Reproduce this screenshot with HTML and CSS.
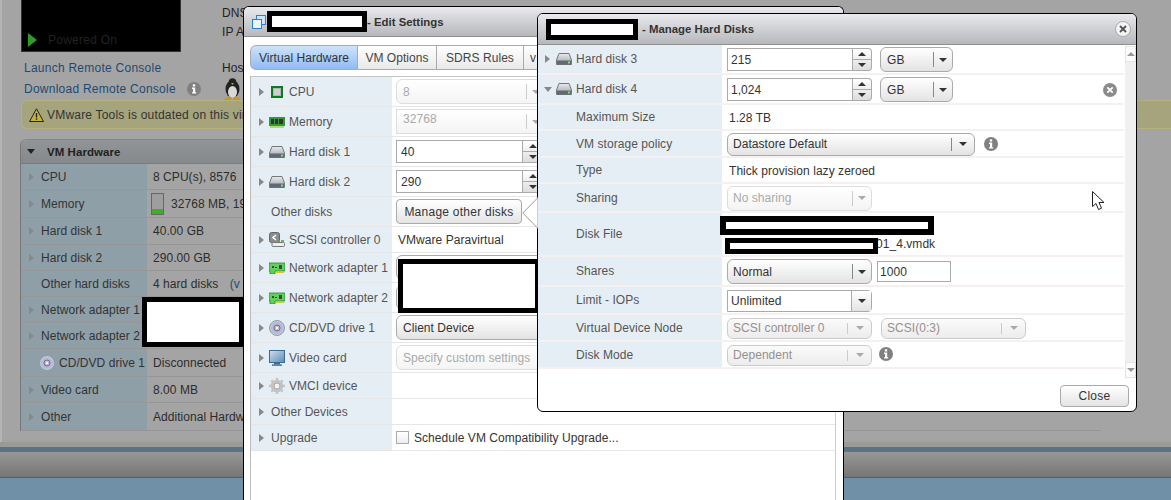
FILE: index.html
```html
<!DOCTYPE html>
<html lang="en">
<head>
<meta charset="utf-8">
<title>Manage Hard Disks</title>
<link rel="stylesheet" href="styles.css">
</head>
<body>
<svg class="defs" width="0" height="0" aria-hidden="true">
  <defs>
    <linearGradient id="hddg" x1="0" y1="0" x2="0" y2="1"><stop offset="0" stop-color="#e8eaee"/><stop offset="1" stop-color="#9ba1a8"/></linearGradient>
    <radialGradient id="cdg"><stop offset="0" stop-color="#eee"/><stop offset=".45" stop-color="#c9a6e0"/><stop offset=".75" stop-color="#a8c4e8"/><stop offset="1" stop-color="#d0d0d0"/></radialGradient>
    <linearGradient id="mong" x1="0" y1="0" x2="1" y2="1"><stop offset="0" stop-color="#cfe0f0"/><stop offset="1" stop-color="#5d8ab5"/></linearGradient>
    <symbol id="i-hdd" viewBox="0 0 16 12"><path d="M3 .5h10L15.5 7v4.500H.5V7z" fill="url(#hddg)" stroke="#777"/><rect x="1" y="7.500" width="14" height="4" fill="#5f6a74"/><rect x="12" y="8.500" width="2" height="2" fill="#7fe060"/></symbol>
    <symbol id="i-cpu" viewBox="0 0 12 12"><rect width="12" height="12" fill="#0d7a1c"/><rect x="2" y="2" width="8" height="8" fill="#b4b4b4"/><rect x="3" y="3" width="6" height="6" fill="#cfcfcf"/></symbol>
    <symbol id="i-mem" viewBox="0 0 16 12"><rect x="0" y="1" width="16" height="9" fill="#2f9b34"/><rect x="2" y="3" width="3" height="5" fill="#333"/><rect x="6" y="3" width="3" height="5" fill="#333"/><rect x="10" y="3" width="4" height="5" fill="#333"/><rect x="1" y="10" width="14" height="2" fill="#b7d86a"/></symbol>
    <symbol id="i-scsi" viewBox="0 0 16 15"><rect x=".5" y=".5" width="10" height="10" rx="2" fill="#8b8b8b" stroke="#666"/><path d="M7 3L4 5.500 7 8" fill="none" stroke="#fff" stroke-width="1.600"/><rect x="3" y="10.500" width="12.500" height="4" rx="1" fill="#eee" stroke="#777"/><rect x="12" y="8" width="3" height="2" fill="#5cc23e"/></symbol>
    <symbol id="i-net" viewBox="0 0 16 12"><path d="M0 1h16v8H6v3H1V9H0z" fill="#5fd05a" stroke="#1c8a2b" stroke-width=".8"/><rect x="3" y="4" width="2" height="2" fill="#444"/><rect x="6" y="5" width="2" height="1" fill="#444"/><rect x="10" y="3" width="3" height="4" fill="#444"/><rect x="7" y="9.400" width="8" height="1.600" fill="#d3c63c"/></symbol>
    <symbol id="i-cd" viewBox="0 0 16 16"><circle cx="8" cy="8" r="7.500" fill="url(#cdg)" stroke="#999"/><circle cx="8" cy="8" r="3" fill="#bbb" stroke="#777"/><circle cx="8" cy="8" r="1.200" fill="#f4f4f4"/></symbol>
    <symbol id="i-mon" viewBox="0 0 16 16"><rect x=".5" y=".5" width="15" height="12" fill="url(#mong)" stroke="#3b6a92"/><rect x="5" y="13" width="6" height="1.400" fill="#3b6a92"/><rect x="3" y="14.400" width="10" height="1.400" fill="#3b6a92"/></symbol>
    <symbol id="i-gear" viewBox="0 0 16 16"><circle cx="8" cy="8" r="4.800" fill="none" stroke="#c4c4c4" stroke-width="3"/><path d="M8 0v16M0 8h16M2.300 2.300l11.400 11.400M13.700 2.300L2.300 13.700" stroke="#c4c4c4" stroke-width="2.400"/><circle cx="8" cy="8" r="3" fill="#f2f2f2" stroke="#aaa"/></symbol>
    <symbol id="i-info" viewBox="0 0 14 14"><circle cx="7" cy="7" r="7" fill="#808080"/><rect x="5.800" y="2.300" width="2.400" height="2.200" fill="#fff"/><path d="M5 5.600h3.200v4.600H9.200v1.400H5v-1.400h1V7H5z" fill="#fff"/></symbol>
  </defs>
</svg>

<div class="page">
  <div class="main">
    <div class="top">
      <div class="console">
        <svg class="power" width="9" height="14" viewBox="0 0 9 14"><path d="M0 0l9 7-9 7z" fill="#2f9b2c"/></svg>
        <span class="power-text">Powered On</span>
      </div>
      <div class="meta">
        <span class="meta-a">DNS</span>
        <span class="meta-b">IP Ad</span>
      </div>
    </div>
    <div class="links">
      <div class="link-row">
        <a class="link">Launch Remote Console</a>
        <span class="host">Host</span>
      </div>
      <div class="link-row">
        <a class="link">Download Remote Console</a>
        <svg class="dl-info" width="14" height="14"><use href="#i-info"/></svg>
        <svg class="penguin" width="19" height="22" viewBox="0 0 19 22"><ellipse cx="9.500" cy="11" rx="7" ry="9" fill="#222"/><ellipse cx="9.500" cy="14" rx="4.500" ry="6" fill="#d8d8d8"/><circle cx="9.500" cy="4" r="3.800" fill="#222"/><path d="M8 5h3l-1.500 2z" fill="#c9962e"/><path d="M0 22l6-4 3 4zM19 22l-6-4-3 4z" fill="#c9962e"/></svg>
      </div>
    </div>
    <div class="warning">
      <svg width="15" height="14" viewBox="0 0 15 14"><path d="M7.500 .8L14.500 13.500H.5z" fill="#c6b23a" stroke="#222"/><rect x="6.800" y="5" width="1.400" height="4.500" fill="#222"/><rect x="6.800" y="10.300" width="1.400" height="1.500" fill="#222"/></svg>
      <span>VMware Tools is outdated on this vir</span>
    </div>
    <section class="panel">
      <header class="panel-head"><i class="tw down dark"></i><b>VM Hardware</b></header>
      <div class="hw r26"><div class="hw-l"><i class="tw"></i><span>CPU</span></div><div class="hw-v">8 CPU(s), 8576</div></div>
      <div class="hw r28"><div class="hw-l"><i class="tw"></i><span>Memory</span></div><div class="hw-v"><span class="membar"></span>32768 MB, 19</div></div>
      <div class="hw r27"><div class="hw-l"><i class="tw"></i><span>Hard disk 1</span></div><div class="hw-v">40.00 GB</div></div>
      <div class="hw r26"><div class="hw-l"><i class="tw"></i><span>Hard disk 2</span></div><div class="hw-v">290.00 GB</div></div>
      <div class="hw r26"><div class="hw-l"><i class="tw none"></i><span>Other hard disks</span></div><div class="hw-v">4 hard disks <a class="view">(v</a></div></div>
      <div class="hw r26"><div class="hw-l"><i class="tw"></i><span>Network adapter 1</span></div><div class="hw-v"></div></div>
      <div class="hw r26"><div class="hw-l"><i class="tw"></i><span>Network adapter 2</span></div><div class="hw-v"></div></div>
      <div class="hw r28"><div class="hw-l cd-l"><svg class="hw-ic" width="16" height="16"><use href="#i-cd"/></svg><span>CD/DVD drive 1</span></div><div class="hw-v">Disconnected</div></div>
      <div class="hw r26"><div class="hw-l"><i class="tw"></i><span>Video card</span></div><div class="hw-v">8.00 MB</div></div>
      <div class="hw r28"><div class="hw-l"><i class="tw"></i><span>Other</span></div><div class="hw-v">Additional Hardw</div></div>
    </section>
  </div>
  <div class="band-a"></div>
  <div class="band-b"></div>
  <div class="band-c"></div>
</div>

<div class="redact redact-left"></div>

<div class="dialog edit">
  <div class="title">
    <svg class="title-ic" width="14" height="14" viewBox="0 0 14 14"><rect x="4.500" y=".5" width="9" height="9" fill="#cfe4fa" stroke="#2b7fd0"/><rect x=".5" y="4.500" width="9" height="9" fill="#eaf3fc" stroke="#2b7fd0"/></svg>
    <span class="redact redact-title1"></span>
    <b>- Edit Settings</b>
  </div>
  <nav class="tabs">
    <span class="tab on">Virtual Hardware</span>
    <span class="tab t2">VM Options</span>
    <span class="tab t3">SDRS Rules</span>
    <span class="tab t4">v</span>
  </nav>
  <div class="table edit-table">
    <div class="row r30"><div class="lab"><i class="tw"></i><svg class="ic ic-cpu" width="12" height="12"><use href="#i-cpu"/></svg><span class="cpu-t">CPU</span></div><div class="val"><div class="sel off w150"><span class="sel-t">8</span><span class="sel-b"><i class="caret"></i></span></div></div></div>
    <div class="row r30"><div class="lab"><i class="tw"></i><svg class="ic" width="16" height="12"><use href="#i-mem"/></svg><span>Memory</span></div><div class="val"><div class="sel off square w150"><span class="sel-t up">32768</span><span class="sel-b"><i class="caret"></i></span></div></div></div>
    <div class="row r30"><div class="lab"><i class="tw"></i><svg class="ic" width="16" height="12"><use href="#i-hdd"/></svg><span>Hard disk 1</span></div><div class="val"><div class="spin"><span class="field">40</span><span class="steps"><i class="st"><i class="caret upc"></i></i><i class="st"><i class="caret"></i></i></span></div></div></div>
    <div class="row r30"><div class="lab"><i class="tw"></i><svg class="ic" width="16" height="12"><use href="#i-hdd"/></svg><span>Hard disk 2</span></div><div class="val"><div class="spin"><span class="field">290</span><span class="steps"><i class="st"><i class="caret upc"></i></i><i class="st"><i class="caret"></i></i></span></div></div></div>
    <div class="row r30"><div class="lab plain"><span>Other disks</span></div><div class="val"><button class="btn manage">Manage other disks</button></div></div>
    <div class="row r26"><div class="lab"><i class="tw"></i><svg class="ic" width="16" height="15"><use href="#i-scsi"/></svg><span>SCSI controller 0</span></div><div class="val"><span class="txt">VMware Paravirtual</span></div></div>
    <div class="row r30"><div class="lab"><i class="tw"></i><svg class="ic" width="16" height="12"><use href="#i-net"/></svg><span>Network adapter 1</span></div><div class="val"><div class="sel w150 h25"><span class="sel-t"></span></div></div></div>
    <div class="row r30"><div class="lab"><i class="tw"></i><svg class="ic" width="16" height="12"><use href="#i-net"/></svg><span>Network adapter 2</span></div><div class="val"><div class="sel w150 h25"><span class="sel-t"></span></div></div></div>
    <div class="row r30"><div class="lab"><i class="tw"></i><svg class="ic" width="16" height="16"><use href="#i-cd"/></svg><span>CD/DVD drive 1</span></div><div class="val"><div class="sel w150 h25"><span class="sel-t">Client Device</span></div></div></div>
    <div class="row r30"><div class="lab"><i class="tw"></i><svg class="ic" width="16" height="16"><use href="#i-mon"/></svg><span>Video card</span></div><div class="val"><div class="sel off w150 h25"><span class="sel-t">Specify custom settings</span></div></div></div>
    <div class="row r26"><div class="lab"><i class="tw"></i><svg class="ic" width="16" height="16"><use href="#i-gear"/></svg><span>VMCI device</span></div><div class="val"></div></div>
    <div class="row r26"><div class="lab tw-only"><i class="tw"></i><span>Other Devices</span></div><div class="val"></div></div>
    <div class="row r26"><div class="lab tw-only"><i class="tw"></i><span>Upgrade</span></div><div class="val"><i class="check"></i><span>Schedule VM Compatibility Upgrade...</span></div></div>
  </div>
  <span class="redact redact-net"></span>
</div>

<div class="dialog manage-dlg">
  <svg class="callout" width="16" height="32" viewBox="0 0 16 32"><path d="M16 .5L.8 16 16 31.500z" fill="#fff" stroke="#999"/></svg>
  <div class="title">
    <span class="redact redact-title2"></span>
    <b>- Manage Hard Disks</b>
    <span class="x-btn"><svg width="14" height="14" viewBox="0 0 14 14"><path d="M3.500 3.500l7 7M10.500 3.500l-7 7" stroke="#555" stroke-width="2.200"/></svg></span>
  </div>
  <div class="manage-body">
    <div class="table manage-table">
      <div class="mrow r30"><div class="mlab"><i class="tw"></i><svg class="ic" width="16" height="12"><use href="#i-hdd"/></svg><span>Hard disk 3</span></div><div class="mval"><div class="spin"><span class="field">215</span><span class="steps"><i class="st"><i class="caret upc"></i></i><i class="st"><i class="caret"></i></i></span></div><div class="sel gb"><span class="sel-t">GB</span><span class="sel-b"><i class="caret"></i></span></div></div></div>
      <div class="mrow r30"><div class="mlab"><i class="tw down"></i><svg class="ic" width="16" height="12"><use href="#i-hdd"/></svg><span>Hard disk 4</span></div><div class="mval"><div class="spin"><span class="field">1,024</span><span class="steps"><i class="st"><i class="caret upc"></i></i><i class="st"><i class="caret"></i></i></span></div><div class="sel gb"><span class="sel-t">GB</span><span class="sel-b"><i class="caret"></i></span></div><span class="del"><svg width="14" height="14" viewBox="0 0 14 14"><circle cx="7" cy="7" r="7" fill="#8a8a8a"/><path d="M4.300 4.300l5.400 5.400M9.700 4.300l-5.400 5.400" stroke="#fff" stroke-width="1.800"/></svg></span></div></div>
      <div class="mrow r26"><div class="mlab sub"><span>Maximum Size</span></div><div class="mval"><span class="txt">1.28 TB</span></div></div>
      <div class="mrow r27"><div class="mlab sub"><span>VM storage policy</span></div><div class="mval"><div class="sel policy"><span class="sel-t">Datastore Default</span><span class="sel-b"><i class="caret"></i></span></div><svg class="m-info" width="14" height="14"><use href="#i-info"/></svg></div></div>
      <div class="mrow r26"><div class="mlab sub"><span>Type</span></div><div class="mval"><span class="txt">Thick provision lazy zeroed</span></div></div>
      <div class="mrow r29"><div class="mlab sub"><span>Sharing</span></div><div class="mval"><div class="sel off w145"><span class="sel-t">No sharing</span><span class="sel-b"><i class="caret"></i></span></div></div></div>
      <div class="mrow r44"><div class="mlab sub"><span>Disk File</span></div><div class="mval"><span class="vmdk">01_4.vmdk</span></div></div>
      <div class="mrow r30"><div class="mlab sub"><span>Shares</span></div><div class="mval"><div class="sel w145"><span class="sel-t">Normal</span><span class="sel-b"><i class="caret"></i></span></div><span class="num">1000</span></div></div>
      <div class="mrow r28"><div class="mlab sub"><span>Limit - IOPs</span></div><div class="mval"><div class="combo"><span class="field">Unlimited</span><span class="sel-b"><i class="caret"></i></span></div></div></div>
      <div class="mrow r27"><div class="mlab sub"><span>Virtual Device Node</span></div><div class="mval"><div class="sel off dim w145 h21"><span class="sel-t">SCSI controller 0</span><span class="sel-b wide"><i class="caret"></i></span></div><div class="sel off dim w145 h21 node2"><span class="sel-t">SCSI(0:3)</span><span class="sel-b wide"><i class="caret"></i></span></div></div></div>
      <div class="mrow r27"><div class="mlab sub"><span>Disk Mode</span></div><div class="mval"><div class="sel off dim w145 h21"><span class="sel-t">Dependent</span><span class="sel-b wide"><i class="caret"></i></span></div><svg class="mode-info" width="14" height="14"><use href="#i-info"/></svg></div></div>
    </div>
    <div class="scroll"><i class="sb"><i class="caret upc gray"></i></i><i class="track"></i><i class="sb"><i class="caret gray"></i></i></div>
  </div>
  <footer class="foot"><button class="btn close">Close</button></footer>
  <span class="redact redact-file1"></span>
  <span class="redact redact-file2"></span>
</div>

<svg class="cursor" width="14" height="20" viewBox="0 0 14 20"><path d="M.5.5v15l3.500-3 2.500 6 3-1.300-2.500-5.700h5z" fill="#fff" stroke="#222"/></svg>
</body>
</html>
```

FILE: styles.css
```css
* { box-sizing: border-box; }
html, body { margin: 0; height: 500px; overflow: hidden; }
body { position: relative; font: 12px "Liberation Sans", Arial, sans-serif; letter-spacing: .05px; color: #444; background: #7090a8; }
.defs { position: absolute; }
i { display: block; font-style: normal; }

.page { height: 500px; display: flex; flex-direction: column; overflow: hidden; }
.main { height: 442px; flex: none; background: #a4a4a4; border-left: 2px solid #b4b4b4; padding-left: 18px; }
.top { display: flex; height: 52px; }
.console { width: 160px; margin-left: 1px; background: #000; border: 1px solid #333; border-top: 0; display: flex; align-items: flex-end; padding: 0 0 4px 6px; }
.power { margin-right: 11px; }
.power-text { color: #222; line-height: 14px; letter-spacing: .25px; }
.meta { display: flex; flex-direction: column; padding: 5px 0 0 41px; color: #222; line-height: 16px; gap: 3px; }
.links { padding: 5px 0 0 4px; }
.link-row { display: flex; align-items: center; height: 21px; }
.link { color: #1f4a70; width: 198px; letter-spacing: .25px; }
.link-row:last-child .link { width: 163px; }
.host { color: #222; }
.dl-info { margin-right: 22px; }
.warning { height: 29px; margin: 1px 0 10px 1px; display: flex; align-items: center; gap: 3px; padding-left: 7px; background: #a5a47c; border: 1px solid #b5b07c; border-right: 0; border-radius: 6px 0 0 6px; color: #333; letter-spacing: .2px; }
.panel { margin-right: 70px; height: 292px; border-top: 1px solid #888; border-left: 1px solid #777; border-radius: 6px 6px 0 0; }
.panel-head { height: 24px; display: flex; align-items: center; padding-left: 6px; background: linear-gradient(#929597, #86898b); border-bottom: 1px solid #7c7c7c; border-radius: 5px 5px 0 0; color: #222; }
.panel-head b { margin-left: 12px; font-size: 11.5px; }
.hw { display: flex; border-bottom: 1px solid #969696; }
.hw-l { width: 126px; display: flex; align-items: center; padding-left: 8px; background: #8f9fa8; color: #333; white-space: nowrap; flex: none; }
.hw-l .tw { margin-right: 7px; }
.hw-l .tw.none { visibility: hidden; }
.cd-l { padding-left: 18px; }
.hw-ic { margin-right: 4px; flex: none; }
.hw-v { flex: 1; display: flex; align-items: center; padding-left: 6px; color: #2c2c2c; white-space: pre; }
.view { color: #1f4a70; margin-left: 8px; }
.membar { width: 13px; height: 22px; margin: 0 7px 0 -2px; border: 1px solid #666; background: linear-gradient(#9e9e9e 74%, #3fae2a 74%); }
.r26 { height: 26px; } .r27 { height: 27px; } .r28 { height: 28px; } .r29 { height: 29px; } .r30 { height: 30px; } .r44 { height: 44px; }

.band-a { height: 5px; flex: none; background: #999c96; }
.band-b { height: 5px; flex: none; background: #5c7382; }
.band-c { height: 26px; flex: none; background: linear-gradient(#979797, #767676); border-bottom: 1px solid #5d5d5d; }

.tw { width: 0; height: 0; flex: none; border-style: solid; border-width: 4px 0 4px 5px; border-color: transparent transparent transparent #888; }
.tw.down { border-width: 5px 4px 0; border-color: #888 transparent transparent; }
.tw.dark { border-color: #222 transparent transparent; }

.dialog { position: absolute; background: #fff; border: 1px solid #000; border-radius: 6px; }
.edit { left: 243px; top: 6px; width: 601px; height: 494px; border-bottom: 0; border-radius: 6px 6px 0 0; }
.manage-dlg { left: 537px; top: 13px; width: 600px; height: 399px; }
.title { height: 30px; display: flex; align-items: center; background: linear-gradient(#e9e9ee, #b6b8bb); border-bottom: 1px solid #8f8f8f; border-radius: 5px 5px 0 0; color: #333; letter-spacing: 0; padding-left: 8px; }
.manage-dlg .title { height: 31px; }
.title-ic { margin-right: 1px; }
.title b { font-size: 11.4px; }
.redact { display: block; background: #fff; border: 5px solid #000; flex: none; }
.redact-left { position: absolute; left: 142px; top: 297px; width: 102px; height: 50px; z-index: 3; }
.redact-title1 { width: 100px; height: 21px; }
.redact-title2 { width: 92px; height: 21px; margin-right: 4px; }
.redact-net { position: absolute; left: 154px; top: 252px; width: 142px; height: 54px; }
.redact-file1 { position: absolute; left: 182px; top: 202px; width: 214px; height: 19px; border-width: 6px; }
.redact-file2 { position: absolute; left: 187px; top: 224px; width: 153px; height: 16px; }
.x-btn { margin-left: auto; margin-right: 5px; width: 16px; height: 16px; border: 1px solid #aaa; border-radius: 50%; background: #f4f4f4; display: flex; align-items: center; justify-content: center; }
.x-btn svg { width: 12px; height: 12px; }

.tabs { display: flex; height: 25px; margin: 8px 0 6px 6px; color: #444; }
.tab { display: flex; align-items: center; justify-content: center; border: 1px solid #aaa; border-left: 0; background: linear-gradient(#fff, #e9e9e9); white-space: nowrap; }
.tab.on { width: 108px; border-left: 1px solid #aaa; border-radius: 6px 0 0 6px; background: linear-gradient(#cfe3fb, #8fbbf2); color: #333; }
.t2 { width: 79px; } .t3 { width: 87px; } .t4 { width: 90px; justify-content: flex-start; padding-left: 6px; border-radius: 0 6px 6px 0; }

.edit-table { margin-left: 6px; width: 586px; height: 424px; border-top: 1px solid #c4c4c4; border-left: 1px solid #bbb; border-right: 1px solid #ccc; }
.row { display: flex; border-bottom: 1px solid #e6e6e6; }
.lab { width: 141px; flex: none; display: flex; align-items: center; padding-left: 8px; background: #e6eef5; white-space: nowrap; color: #555; }
.lab .tw { margin-right: 5px; }
.ic { flex: none; margin-right: 4px; }
.ic-cpu { margin-left: 2px; margin-right: 5px; }
.cpu-t { margin-left: 1px; }
.lab.plain { padding-left: 20px; }
.lab.tw-only .tw { margin-right: 7px; }
.val { flex: 1; display: flex; align-items: center; padding-left: 4px; white-space: nowrap; color: #333; }
.txt { margin-left: 2px; color: #333; white-space: nowrap; }
.check { width: 13px; height: 13px; margin-right: 5px; border: 1px solid #aaa; background: linear-gradient(#fff, #eee); }

.sel { display: flex; align-items: stretch; height: 25px; border: 1px solid #aaa; border-radius: 6px; background: linear-gradient(#fff, #e3e3e3); color: #333; flex: none; }
.sel-t { flex: 1; display: flex; align-items: center; padding-left: 6px; white-space: nowrap; overflow: hidden; }
.sel-t.up { padding-bottom: 5px; }
.sel-b { width: 19px; margin: 4px 0; border-left: 1px solid #888; display: flex; align-items: center; justify-content: center; flex: none; }
.sel-b.wide { width: 24px; }
.caret { width: 0; height: 0; border-style: solid; border-width: 4px 4px 0; border-color: #333 transparent transparent; }
.caret.upc { border-width: 0 4px 4px; border-color: transparent transparent #333; }
.caret.gray { border-top-color: #999; border-bottom-color: #999; }
.sel.off { background: linear-gradient(#fff, #f4f4f4); border-color: #ddd; color: #aaa; }
.sel.off .sel-b { border-left-color: #ccc; }
.sel.off .caret { border-top-color: #aaa; }
.sel.dim { background: linear-gradient(#fbfbfb, #ececec); color: #988f8f; border-color: #ccc; }
.sel.square { border-radius: 0; }
.w150 { width: 150px; } .w145 { width: 145px; }
.h25 { height: 25px; } .h21 { height: 21px; }
.spin { display: flex; height: 23px; flex: none; }
.field { width: 127px; border: 1px solid #aaa; display: flex; align-items: center; padding-left: 4px; background: #fff; color: #333; }
.steps { width: 20px; display: flex; flex-direction: column; border: 1px solid #aaa; border-left: 0; border-radius: 0 4px 4px 0; background: linear-gradient(#fff, #ddd); }
.st { flex: 1; display: flex; align-items: center; justify-content: center; }
.st + .st { border-top: 1px solid #aaa; }
.btn { font: inherit; letter-spacing: .25px; color: #333; border: 1px solid #aaa; border-radius: 4px; background: linear-gradient(#fff, #e4e4e4); padding: 0; }
.manage { width: 126px; height: 25px; }

.manage-body { display: flex; }
.manage-table { width: 586px; height: 324px; }
.mrow { display: flex; border-bottom: 2px solid #f6f0f0; }
.mlab { width: 184px; flex: none; display: flex; align-items: center; padding-left: 7px; background: #e6eef5; color: #555; white-space: nowrap; }
.mlab .tw { margin-right: 6px; }
.mlab .tw.down { margin-right: 4px; margin-left: -1px; }
.mlab.sub { padding-left: 38px; }
.mval { flex: 1; display: flex; align-items: center; padding: 1px 0 0 5px; color: #333; }
.mval .field { width: 126px; padding-left: 3px; }
.mval .steps { width: 19px; }
.mval .sel-t { padding-left: 5px; }
.mval .gb .sel-t { padding-left: 6px; }
.gb { width: 73px; margin-left: 8px; }
.del { margin-left: 150px; display: flex; }
.policy { width: 248px; height: 23px; }
.policy .sel-b { width: 23px; }
.m-info { margin-left: 9px; }
.mode-info { margin-left: 7px; margin-top: -2px; }
.vmdk { margin: 18px 0 0 149px; align-self: center; }
.num { width: 74px; height: 21px; margin-left: 5px; border: 1px solid #aaa; display: flex; align-items: center; padding-left: 2px; background: #fff; }
.combo { width: 145px; height: 22px; display: flex; border: 1px solid #aaa; border-radius: 0 4px 4px 0; }
.combo .field { flex: 1; width: auto; border: 0; border-right: 1px solid #aaa; }
.combo .sel-b { margin: 0; border-left: 0; background: linear-gradient(#fff, #e3e3e3); }
.node2 { margin-left: 9px; }
.scroll { width: 11px; margin: 1px 0 0 1px; height: 332px; display: flex; flex-direction: column; background: #f0f0f0; }
.sb { height: 16px; flex: none; display: flex; align-items: center; justify-content: center; background: #fbfbfb; border: 1px solid #e4e4e4; }
.track { flex: 1; }
.foot { display: flex; justify-content: flex-end; padding: 7px 7px 0 0; }
.close { width: 69px; height: 22px; }
.callout { position: absolute; left: -16px; top: 183px; }
.cursor { position: absolute; left: 1092px; top: 191px; }
```
